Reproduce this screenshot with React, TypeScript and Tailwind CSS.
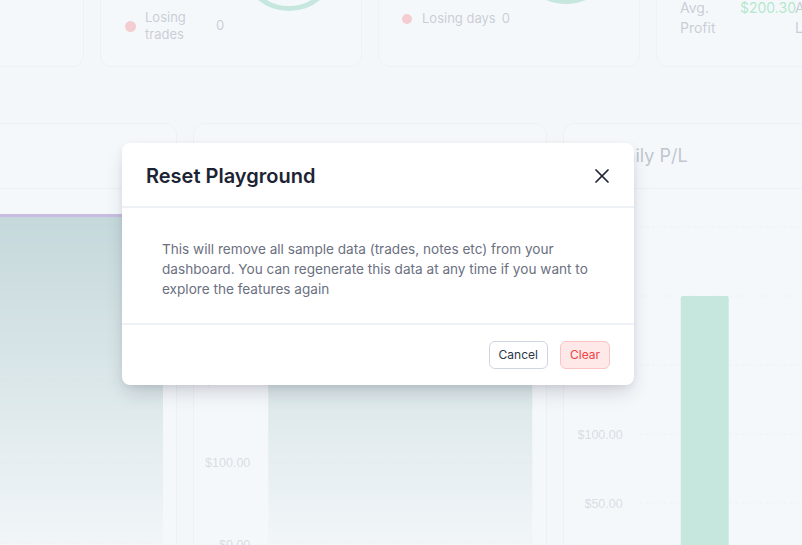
import React from 'react';
import { X } from 'lucide-react';

const green = '#5fc79a';
const teal = '#5b9290';

const Donut: React.FC = () => (
  <svg width={98} height={98} className="shrink-0">
    <circle cx={49} cy={49} r={46.5} fill="none" stroke={green} strokeWidth={5} />
  </svg>
);

const Dot: React.FC<{ size: string }> = ({ size }) => (
  <span className={`${size} shrink-0 rounded-full bg-[#f87171]`} />
);

const axisFont = { fontFamily: '"Liberation Sans", Arial, sans-serif', fontSize: 12.5 };

const AreaChart: React.FC = () => {
  const lines = [27, 109, 191, 273, 355];
  return (
    <svg width={353} height={400}>
      <defs>
        <linearGradient id="fadeA" x1="0" y1="0" x2="0" y2="1">
          <stop offset="0%" stopColor={teal} stopOpacity={0.98} />
          <stop offset="100%" stopColor={teal} stopOpacity={0.08} />
        </linearGradient>
      </defs>
      {lines.map((y) => (
        <line key={y} x1={80} x2={340} y1={y} y2={y} stroke="#e5e7eb" strokeDasharray="3 3" />
      ))}
      <rect x={80} y={27} width={260} height={328} fill="url(#fadeA)" />
      <line x1={80} x2={340} y1={26.5} y2={26.5} stroke="#6a3aa8" strokeWidth={3} />
    </svg>
  );
};

const VolumeChart: React.FC = () => {
  const ticks = [
    { y: 27, label: '$400.00' },
    { y: 109, label: '$300.00' },
    { y: 191, label: '$200.00' },
    { y: 273, label: '$100.00' },
    { y: 355, label: '$0.00' },
  ];
  return (
    <svg width={353} height={400}>
      <defs>
        <linearGradient id="fadeB" x1="0" y1="0" x2="0" y2="1">
          <stop offset="0%" stopColor={teal} stopOpacity={0.98} />
          <stop offset="100%" stopColor={teal} stopOpacity={0.08} />
        </linearGradient>
      </defs>
      {ticks.map((t) => (
        <g key={t.y}>
          <line x1={72.3} x2={341.3} y1={t.y} y2={t.y} stroke="#e5e7eb" strokeDasharray="3 3" />
          <text x={56.3} y={t.y + 1.5} textAnchor="end" dominantBaseline="middle" fill="#9ca3af" style={axisFont}>
            {t.label}
          </text>
        </g>
      ))}
      <rect x={74.3} y={27} width={264} height={328} fill="url(#fadeB)" />
    </svg>
  );
};

const DailyChart: React.FC = () => {
  const ticks = [
    { y: 38, label: '$250.00' },
    { y: 107, label: '$200.00' },
    { y: 176, label: '$150.00' },
    { y: 245, label: '$100.00' },
    { y: 314, label: '$50.00' },
    { y: 383, label: '$0.00' },
  ];
  return (
    <svg width={353} height={400}>
      {ticks.map((t) => (
        <g key={t.y}>
          <line x1={75.7} x2={353} y1={t.y} y2={t.y} stroke="#e5e7eb" strokeDasharray="3 3" />
          <text x={58.7} y={t.y + 1.5} textAnchor="end" dominantBaseline="middle" fill="#9ca3af" style={axisFont}>
            {t.label}
          </text>
        </g>
      ))}
      <path d="M116.7 383 V109 a2 2 0 0 1 2 -2 H162.7 a2 2 0 0 1 2 2 V383 Z" fill={green} />
    </svg>
  );
};

export default function App() {
  return (
    <div className="relative h-[545px] w-[802px] overflow-hidden bg-[#f9fafb] font-['Inter',sans-serif]">
      {/* dashboard, scrolled */}
      <div className="-mt-[113px] ml-[-178px] w-[1096px]">
        <div className="grid grid-cols-4 gap-4">
          <div className="h-[180px] rounded-xl border border-gray-200 bg-white" />

          <div className="flex h-[180px] rounded-xl border border-gray-200 bg-white pl-[24px] pt-[25px]">
            <div className="flex w-[115px] flex-col gap-[13px] pt-[49px] text-[13px] text-gray-500">
              {[
                { label: 'Winning trades', value: '1' },
                { label: 'Losing trades', value: '0' },
              ].map((i) => (
                <div key={i.label} className="flex h-[34px] items-center">
                  <Dot size="h-[11px] w-[11px]" />
                  <span className="ml-[9px] w-[60px] leading-[17px]">{i.label}</span>
                  <span className="ml-[11px]">{i.value}</span>
                </div>
              ))}
            </div>
            <Donut />
          </div>

          <div className="flex h-[180px] rounded-xl border border-gray-200 bg-white pl-[23px] pt-[18px]">
            <div className="flex w-[115px] flex-col gap-[17px] pt-[70px] text-[13px] text-gray-500">
              {[
                { label: 'Winning days', value: '1' },
                { label: 'Losing days', value: '0' },
              ].map((i) => (
                <div key={i.label} className="flex h-[17px] items-center whitespace-nowrap leading-[17px]">
                  <Dot size="h-[10px] w-[10px]" />
                  <span className="ml-[10px]">{i.label}</span>
                  <span className="ml-[6px]">{i.value}</span>
                </div>
              ))}
            </div>
            <Donut />
          </div>

          <div className="h-[180px] rounded-xl border border-gray-200 bg-white pl-[23px] pt-[110px]">
            <div className="grid grid-cols-[60px_55px_60px_55px] text-[14px] leading-5">
              <span className="text-gray-500">Avg. Profit</span>
              <span className="text-[#22c55e]">$200.30</span>
              <span className="text-gray-500">Avg. Loss</span>
              <span className="text-[#ef4444]">$0.00</span>
            </div>
          </div>
        </div>

        <div className="mt-14 grid grid-cols-3 gap-4">
          <div className="h-[480px] rounded-xl border border-gray-200 bg-white">
            <div className="flex h-[65px] items-center border-b border-gray-200 pl-6 text-lg text-gray-600">Balance</div>
            <AreaChart />
          </div>
          <div className="h-[480px] rounded-xl border border-gray-200 bg-white">
            <div className="flex h-[65px] items-center border-b border-gray-200 pl-12 text-lg text-gray-600">Volume</div>
            <VolumeChart />
          </div>
          <div className="h-[480px] rounded-xl border border-gray-200 bg-white">
            <div className="flex h-[65px] items-center border-b border-gray-200 pl-12 text-lg text-gray-600">Daily P/L</div>
            <DailyChart />
          </div>
        </div>
      </div>

      {/* backdrop */}
      <div className="absolute inset-0 bg-[#f1f5f9]/70" />

      {/* modal */}
      <div className="absolute left-[122px] top-[143px] w-[512px] rounded-lg bg-white shadow-[0_10px_20px_-4px_rgba(15,23,42,0.18),0_2px_6px_rgba(15,23,42,0.06)]">
        <div className="flex h-[65px] items-center justify-between border-b-2 border-[#eef1f6] pl-6 pr-5 pt-[3px]">
          <h3 className="text-xl font-semibold text-[#1c2434]">Reset Playground</h3>
          <X size={24} strokeWidth={1.7} className="text-[#1e2535]" />
        </div>
        <div className="border-b-2 border-[#eef1f6] px-10 pb-[24px] pt-[31px]">
          <p className="text-[13.6px] leading-5 text-[#6b7080]">
            This will remove all sample data (trades, notes etc) from your dashboard. You can regenerate this data at any
            time if you want to explore the features again
          </p>
        </div>
        <div className="flex justify-end gap-3 px-6 py-4">
          <button className="h-7 rounded-md border border-[#cfd6e2] bg-white px-[9px] text-[12px] text-[#2d3648]">
            Cancel
          </button>
          <button className="h-7 rounded-md border border-[#fbc4c4] bg-[#fee8e8] px-[9px] text-[12px] text-[#ef4444]">
            Clear
          </button>
        </div>
      </div>
    </div>
  );
}
